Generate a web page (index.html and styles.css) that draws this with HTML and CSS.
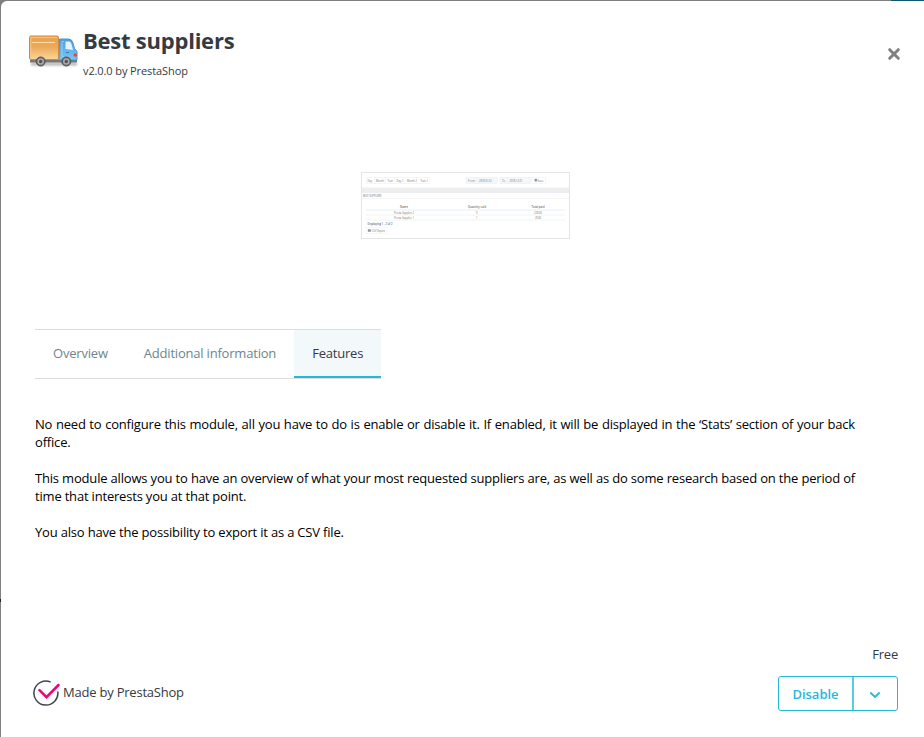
FILE: index.html
```html
<!DOCTYPE html>
<html lang="en">
<head>
<meta charset="utf-8">
<title>Best suppliers</title>
<link rel="stylesheet" href="styles.css">
</head>
<body>
<main class="modal">
  <header class="header">
    <svg class="truck" width="52" height="38" viewBox="0 0 52 38">
      <defs>
        <linearGradient id="box" x1="0" y1="0" x2="0" y2="1"><stop offset="0" stop-color="#e9a24c"/><stop offset=".45" stop-color="#eca859"/><stop offset="1" stop-color="#fad69b"/></linearGradient>
        <linearGradient id="cab" x1="0" y1="0" x2="0" y2="1"><stop offset="0" stop-color="#4a9fe0"/><stop offset="1" stop-color="#7cc4f4"/></linearGradient>
        <filter id="soft" filterUnits="userSpaceOnUse" x="0" y="24" width="52" height="14"><feGaussianBlur stdDeviation="1"/></filter>
      </defs>
      <path d="M4 32h46" stroke="#777" stroke-width="3" opacity=".55" filter="url(#soft)"/>
      <path d="M3 27.500h47v3H3z" fill="#777"/>
      <path d="M32.500 7h9q3.500 0 4.500 4l1.500 5.500 2.500 3v8.500H32z" fill="url(#cab)" stroke="#4a97d2"/>
      <path d="M38.500 9.500h3.500q2 0 2.500 2.500l1.500 6-7.500-1z" fill="#e2f3ff"/>
      <path d="M37 9.500h-2v15h2" fill="none" stroke="#91cdf4"/>
      <path d="M39 20.500h3" stroke="#347daf"/>
      <circle cx="48.300" cy="23" r="1.800" fill="#eb4c26"/>
      <rect x="2.500" y="4" width="29" height="23.500" rx="1.500" fill="url(#box)" stroke="#d08a40"/>
      <path d="M3.800 25.500V5.400H30" fill="none" stroke="#f8c987"/>
      <path d="M5 10.500h23" stroke="#ffdda5"/>
      <g fill="#666" stroke="#555"><circle cx="13.700" cy="29.500" r="4.500"/><circle cx="39.300" cy="29.500" r="4.500"/></g>
      <g fill="#555" stroke="#aaa" stroke-width="1.500"><circle cx="13.700" cy="29.500" r="2.500"/><circle cx="39.300" cy="29.500" r="2.500"/></g>
    </svg>
    <div class="heading">
      <h1>Best suppliers</h1>
      <p class="version">v2.0.0 by PrestaShop</p>
    </div>
    <button class="close" aria-label="Close">
      <svg width="14" height="14" viewBox="0 0 14 14"><path d="M2.700 2.700l8.600 8.600M11.300 2.700l-8.600 8.600" stroke="#808080" stroke-width="3" stroke-linecap="round"/></svg>
    </button>
  </header>

  <div class="preview">
    <svg width="209" height="67" viewBox="0 0 209 67">
      <rect width="209" height="67" fill="#eceef0"/>
      <rect x="1" y="1" width="207" height="14.500" fill="#fff"/>
      <rect x="1" y="21" width="207" height="45" fill="#fff"/>
      <path d="M1 26.500h207" stroke="#f5f5f5"/>
      <g fill="#f4f8fa" stroke="#e8edef" stroke-width=".5"><rect x="105" y="5.500" width="31" height="6"/><rect x="139" y="5.500" width="31" height="6"/></g>
      <g fill="none" stroke="#eee" stroke-width=".5"><rect x="5" y="5.500" width="64" height="6"/><rect x="172" y="5.500" width="12.500" height="6"/><path d="M13.500 5.500v6M24.500 5.500v6M33.500 5.500v6M43.500 5.500v6M55.500 5.500v6M116 5.500v6M147 5.500v6"/><rect x="5" y="55.500" width="21" height="6"/></g>
      <path d="M5 38h199" stroke="#e4eff5"/>
      <path d="M5 43h199M5 48h199" stroke="#e5ecef" stroke-width=".6"/>
      <g class="tiny">
        <text x="6.500" y="9.500" textLength="4.500">Day</text><text x="15" y="9.500" textLength="8">Month</text><text x="26.500" y="9.500" textLength="5.500">Year</text><text x="35.500" y="9.500" textLength="7">Day-1</text><text x="46" y="9.500" textLength="10">Month-1</text><text x="59.500" y="9.500" textLength="7.500">Year-1</text>
        <text x="107" y="9.500" textLength="7">From</text><text x="118" y="9.500" textLength="13">2018-01-01</text><text x="141" y="9.500" textLength="3">To</text><text x="148.500" y="9.500" textLength="13">2018-12-31</text><text x="176.500" y="9.500" textLength="6">Save</text>
        <text x="2" y="25" textLength="18.500">BEST SUPPLIERS</text>
        <text x="33" y="41.500" textLength="20">Presta Supplier 2</text><text x="33" y="46.500" textLength="20">Presta Supplier 1</text>
        <text x="115" y="41.500">9</text><text x="115" y="46.500">1</text><text x="173" y="41.500" textLength="8">228.00</text><text x="174" y="46.500" textLength="6">29.00</text><text x="11" y="59.500" textLength="13">CSV Export</text>
        <g class="tiny-bold"><text x="39" y="35.500" textLength="8">Name</text><text x="107" y="35.500" textLength="18">Quantity sold</text><text x="170.500" y="35.500" textLength="13">Total paid</text><text x="6.500" y="53" textLength="25">Displaying 1 - 2 of 2</text></g>
      </g>
      <path d="M173.800 7h2v2.300h-2zM7 57.500h2.800v2H7z" fill="#999" stroke="#777" stroke-width=".3"/>
      <rect x=".5" y=".5" width="208" height="66" fill="none" stroke="#e5e5e5"/>
    </svg>
  </div>

  <nav class="tabs">
    <a class="tab">Overview</a><a class="tab">Additional information</a><a class="tab active">Features</a>
  </nav>

  <section class="content">
    <p>No need to configure this module, all you have to do is enable or disable it. If enabled, it will be displayed in the ‘Stats’ section of your back office.</p>
    <p>This module allows you to have an overview of what your most requested suppliers are, as well as do some research based on the period of time that interests you at that point.</p>
    <p>You also have the possibility to export it as a CSV file.</p>
  </section>

  <footer class="footer">
    <div class="made">
      <svg width="27" height="27" viewBox="0 0 27 27" fill="none"><path d="M17.700 2.100A12 12 0 1 0 24.800 11.500" stroke="#414550" stroke-width="1.500"/><path d="M6.500 10.200l7 7L25.500 5" stroke="#ed0677" stroke-width="2.500" stroke-linecap="round"/></svg>
      <span>Made by PrestaShop</span>
    </div>
    <div class="purchase">
      <span class="price">Free</span>
      <div class="actions">
        <button class="disable">Disable</button>
        <button class="toggle" aria-label="More actions"><svg width="12" height="8" viewBox="0 0 12 8"><path d="M1.300 1.500L6 6l4.700-4.500" fill="none" stroke="#25b9d7" stroke-width="1.800"/></svg></button>
      </div>
    </div>
  </footer>
</main>
</body>
</html>
```
FILE: styles.css
```css
* { box-sizing: border-box; }
body {
  margin: 0;
  height: 737px;
  padding: 1px 0 0 1px;
  overflow: hidden;
  background: linear-gradient(#222, #222) 0 599px / 1px 3px no-repeat, linear-gradient(#10596c, #10596c) 891px 0 / 33px 1px no-repeat, #7f7f7f;
  font: 13px/18px "Open Sans", sans-serif;
  letter-spacing: -0.2px;
  color: #363a41;
}
h1, p { margin: 0; }
button { margin: 0; padding: 0; border: 0; background: none; font: inherit; }
svg { display: block; }
.modal {
  height: 736px;
  background: #fff;
  border-top-left-radius: 6px;
  display: flex;
  flex-direction: column;
}
.header { display: flex; height: 171px; padding: 24px 23px 0 26px; }
.truck { margin-top: 7px; }
.heading { flex: 1; padding-left: 4px; }
h1 { font-size: 22px; line-height: 30px; font-weight: 700; letter-spacing: -0.23px; }
.version { margin-top: 7px; font-size: 11px; line-height: 18px; letter-spacing: -0.1px; }
.close { height: 14px; margin-top: 22px; }
.preview { height: 157px; padding-left: 360px; }
.tiny { font-size: 2.6px; letter-spacing: 0; fill: #777; }
.tiny-bold { font-weight: 600; fill: #666; }
.tabs {
  display: flex;
  align-self: flex-start;
  margin-left: 34px;
  height: 50px;
  border-top: 1px solid #ddd;
  border-bottom: 1px solid #ddd;
}
.tab { padding: 14px 18px 0; color: #6c868e; letter-spacing: -0.2px; }
.tab.active { width: 87px; padding-right: 0; background: #f3f8fb; border-bottom: 2px solid #25b9d7; color: #363a41; }
.content { width: 820px; margin: 36px 0 0 34px; color: #000; text-align: justify; letter-spacing: -0.19px; }
.content p { margin-bottom: 18px; }
.footer {
  display: flex;
  justify-content: space-between;
  margin-top: auto;
  padding: 0 26px 25px 32px;
}
.made { display: flex; align-items: center; gap: 3px; align-self: flex-end; height: 27px; margin-bottom: 5px; }
.made span { margin-top: -3px; letter-spacing: -0.22px; }
.purchase { display: flex; flex-direction: column; align-items: flex-end; }
.price { margin-bottom: 13px; }
.actions { display: flex; height: 35px; margin-bottom: 1px; border: 1px solid #25b9d7; border-radius: 3px; }
.disable { width: 75px; padding-top: 1px; border-right: 2px solid #5acbe1; color: #25b9d7; font-weight: 600; letter-spacing: 0; }
.toggle { width: 43px; display: flex; align-items: center; justify-content: center; padding: 3px 1px 0 0; }
```
